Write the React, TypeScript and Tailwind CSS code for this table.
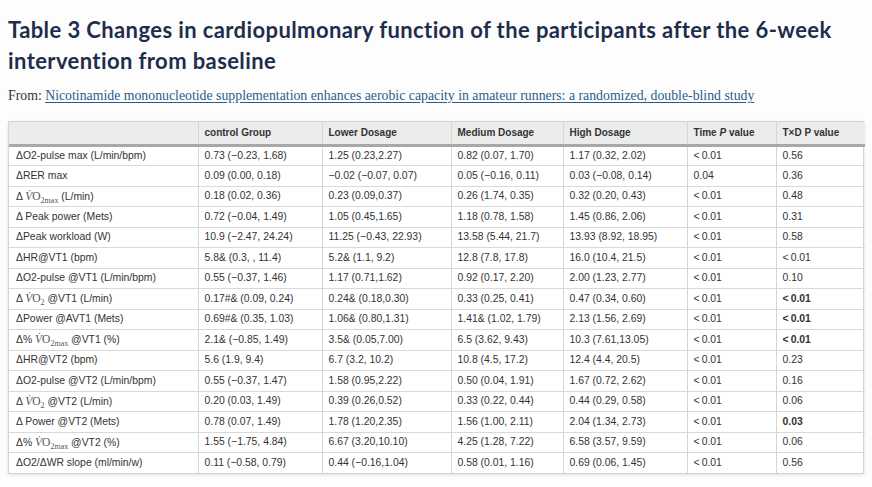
import React from "react";

type Row = {
    label: React.ReactNode;
    cells: string[];
    bold?: boolean;
};

const Vo2 = ({ max }: { max?: boolean }) => (
    <span className="font-['Liberation_Serif',serif] text-[11.5px] text-[#555]">
        <span className="italic">V̇</span>O<sub className="text-[8px] align-[-1px]">{max ? "2max" : "2"}</sub>
    </span>
);

const rows: Row[] = [
    { label: "ΔO2-pulse max (L/min/bpm)", cells: ["0.73 (−0.23, 1.68)", "1.25 (0.23,2.27)", "0.82 (0.07, 1.70)", "1.17 (0.32, 2.02)", "<\u20090.01", "0.56"] },
    { label: "ΔRER max", cells: ["0.09 (0.00, 0.18)", "−0.02 (−0.07, 0.07)", "0.05 (−0.16, 0.11)", "0.03 (−0.08, 0.14)", "0.04", "0.36"] },
    { label: <>Δ <Vo2 max /> (L/min)</>, cells: ["0.18 (0.02, 0.36)", "0.23 (0.09,0.37)", "0.26 (1.74, 0.35)", "0.32 (0.20, 0.43)", "<\u20090.01", "0.48"] },
    { label: "Δ Peak power (Mets)", cells: ["0.72 (−0.04, 1.49)", "1.05 (0.45,1.65)", "1.18 (0.78, 1.58)", "1.45 (0.86, 2.06)", "<\u20090.01", "0.31"] },
    { label: "ΔPeak workload (W)", cells: ["10.9 (−2.47, 24.24)", "11.25 (−0.43, 22.93)", "13.58 (5.44, 21.7)", "13.93 (8.92, 18.95)", "<\u20090.01", "0.58"] },
    { label: "ΔHR@VT1 (bpm)", cells: ["5.8& (0.3, , 11.4)", "5.2& (1.1, 9.2)", "12.8 (7.8, 17.8)", "16.0 (10.4, 21.5)", "<\u20090.01", "<\u20090.01"] },
    { label: "ΔO2-pulse @VT1 (L/min/bpm)", cells: ["0.55 (−0.37, 1.46)", "1.17 (0.71,1.62)", "0.92 (0.17, 2.20)", "2.00 (1.23, 2.77)", "<\u20090.01", "0.10"] },
    { label: <>Δ <Vo2 /> @VT1 (L/min)</>, cells: ["0.17#& (0.09, 0.24)", "0.24& (0.18,0.30)", "0.33 (0.25, 0.41)", "0.47 (0.34, 0.60)", "<\u20090.01", "<\u20090.01"], bold: true },
    { label: "ΔPower @AVT1 (Mets)", cells: ["0.69#& (0.35, 1.03)", "1.06& (0.80,1.31)", "1.41& (1.02, 1.79)", "2.13 (1.56, 2.69)", "<\u20090.01", "<\u20090.01"], bold: true },
    { label: <>Δ% <Vo2 max /> @VT1 (%)</>, cells: ["2.1& (−0.85, 1.49)", "3.5& (0.05,7.00)", "6.5 (3.62, 9.43)", "10.3 (7.61,13.05)", "<\u20090.01", "<\u20090.01"], bold: true },
    { label: "ΔHR@VT2 (bpm)", cells: ["5.6 (1.9, 9.4)", "6.7 (3.2, 10.2)", "10.8 (4.5, 17.2)", "12.4 (4.4, 20.5)", "<\u20090.01", "0.23"] },
    { label: "ΔO2-pulse @VT2 (L/min/bpm)", cells: ["0.55 (−0.37, 1.47)", "1.58 (0.95,2.22)", "0.50 (0.04, 1.91)", "1.67 (0.72, 2.62)", "<\u20090.01", "0.16"] },
    { label: <>Δ <Vo2 /> @VT2 (L/min)</>, cells: ["0.20 (0.03, 1.49)", "0.39 (0.26,0.52)", "0.33 (0.22, 0.44)", "0.44 (0.29, 0.58)", "<\u20090.01", "0.06"] },
    { label: "Δ Power @VT2 (Mets)", cells: ["0.78 (0.07, 1.49)", "1.78 (1.20,2.35)", "1.56 (1.00, 2.11)", "2.04 (1.34, 2.73)", "<\u20090.01", "0.03"], bold: true },
    { label: <>Δ% <Vo2 max /> @VT2 (%)</>, cells: ["1.55 (−1.75, 4.84)", "6.67 (3.20,10.10)", "4.25 (1.28, 7.22)", "6.58 (3.57, 9.59)", "<\u20090.01", "0.06"] },
    { label: "ΔO2/ΔWR slope (ml/min/w)", cells: ["0.11 (−0.58, 0.79)", "0.44 (−0.16,1.04)", "0.58 (0.01, 1.16)", "0.69 (0.06, 1.45)", "<\u20090.01", "0.56"] },
];

const widths = ["w-[189px]", "w-[124px]", "w-[129px]", "w-[112px]", "w-[124px]", "w-[89px]", "w-[89px]"];

export default function App() {
    return (
        <div className="w-[872px] h-[487px] bg-[#fdfdfd] overflow-hidden px-2 pt-[14px]">
            <h1 className="font-['Lato',sans-serif] font-bold text-[22px] tracking-[0.4px] leading-[31px] text-[#1f2d4d]">
                Table 3 Changes in cardiopulmonary function of the participants after the 6-week intervention from baseline
            </h1>
            <p className="mt-[9px] font-['Liberation_Serif',serif] text-[13.8px] leading-[21px] text-[#333]">
                From:{" "}
                <a href="#" className="text-[#2a5d8c] underline underline-offset-2">
                    Nicotinamide mononucleotide supplementation enhances aerobic capacity in amateur runners: a randomized, double-blind study
                </a>
            </p>
            <div className="mt-[15px] w-[856px] bg-white border border-[#d4d4d4] shadow-[0_1px_3px_rgba(0,0,0,0.12)]">
                <table className="table-fixed border-collapse w-full font-['Liberation_Sans',sans-serif] text-[10.4px] text-[#333]">
                    <colgroup>
                        {widths.map((w, i) => (
                            <col key={i} className={w} />
                        ))}
                    </colgroup>
                    <thead>
                        <tr className="h-[23px] bg-[#ececec] border-b-[3px] border-[#a8a8a8] text-[10px]">
                            <th className="border-r border-[#d6d6d6]"></th>
                            <th className="text-left font-bold px-[6px] border-r border-[#d6d6d6]">control Group</th>
                            <th className="text-left font-bold px-[6px] border-r border-[#d6d6d6]">Lower Dosage</th>
                            <th className="text-left font-bold px-[6px] border-r border-[#d6d6d6]">Medium Dosage</th>
                            <th className="text-left font-bold px-[6px] border-r border-[#d6d6d6]">High Dosage</th>
                            <th className="text-left font-bold px-[6px] border-r border-[#d6d6d6]">
                                Time <span className="italic">P</span> value
                            </th>
                            <th className="text-left font-bold px-[6px]">T×D P value</th>
                        </tr>
                    </thead>
                    <tbody>
                        {rows.map((row, i) => (
                            <tr key={i} className="h-[20.5px] border-b border-[#d9d9d9] last:border-b-0">
                                <td className="px-[7px] border-r border-[#d6d6d6] whitespace-nowrap">{row.label}</td>
                                {row.cells.map((c, j) => (
                                    <td
                                        key={j}
                                        className={`px-[6px] whitespace-nowrap ${j < 5 ? "border-r border-[#d6d6d6]" : ""} ${j === 5 && row.bold ? "font-bold" : ""}`}
                                    >
                                        {c}
                                    </td>
                                ))}
                            </tr>
                        ))}
                    </tbody>
                </table>
            </div>
        </div>
    );
}
